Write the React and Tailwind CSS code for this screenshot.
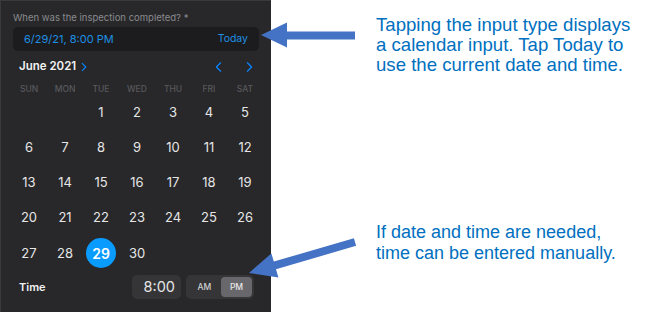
import React from 'react';

const weekdays = ['SUN', 'MON', 'TUE', 'WED', 'THU', 'FRI', 'SAT'];
const weeks = [
  [null, null, 1, 2, 3, 4, 5],
  [6, 7, 8, 9, 10, 11, 12],
  [13, 14, 15, 16, 17, 18, 19],
  [20, 21, 22, 23, 24, 25, 26],
  [27, 28, 29, 30, null, null, null],
];

const Chevron = ({ dir = 'right', className = '' }) => (
  <svg viewBox="0 0 10 16" className={className} fill="none" stroke="currentColor" strokeWidth="1.8" strokeLinecap="round" strokeLinejoin="round">
    {dir === 'right' ? <path d="M2 2l6 6-6 6" /> : <path d="M8 2L2 8l6 6" />}
  </svg>
);

const Arrows = () => (
  <svg className="absolute inset-0 pointer-events-none" width="650" height="312" viewBox="0 0 650 312">
    {/* top arrow, pointing at the input */}
    <polygon
      fill="#4472c4"
      points="261,35 287,22.5 287,31.5 355,31.5 355,39.5 287,39.5 287,47.5"
    />
    {/* bottom arrow, pointing at the time picker */}
    <polygon
      fill="#4472c4"
      points="249,273 271.4,253.4 273.8,261.6 353.9,238.2 356.1,245.8 276,269.2 278.4,277.4"
    />
  </svg>
);

const DatePicker = () => (
  <div className="w-[271px] h-[312px] bg-[#28282a] border-t border-l border-[#3a3a3c] flex flex-col" style={{ fontFamily: 'Inter, "Noto Sans", sans-serif' }}>
    <div className="px-3 mt-[10px] h-[14px] leading-[14px] text-[9.5px] text-[#8a8a8e]">
      When was the inspection completed? *
    </div>

    <div className="mx-3 mt-[2px] h-[24px] rounded-[5px] bg-[#1c1c1e] flex items-center justify-between pl-[11px] pr-[11px]">
      <span className="text-[11px] text-[#1e8fe3]">6/29/21, 8:00 PM</span>
      <span className="text-[10.5px] text-[#1e8fe3]">Today</span>
    </div>

    <div className="mt-[6px] h-[20px] flex items-center pl-[18px] pr-[18px]">
      <span className="text-[11.5px] font-semibold text-[#f2f2f2]">June 2021</span>
      <Chevron className="w-[6px] h-[10px] ml-[5px] text-[#0a84ff]" />
      <div className="ml-auto flex items-center gap-[24px]">
        <Chevron dir="left" className="w-[7px] h-[12px] text-[#0a84ff]" />
        <Chevron className="w-[7px] h-[12px] text-[#0a84ff]" />
      </div>
    </div>

    <div className="mt-[6px] ml-[10px] w-[252px] h-[12px] grid grid-cols-7">
      {weekdays.map((d) => (
        <div key={d} className="flex items-center justify-center text-[8.5px] font-medium text-[#58585c]">
          {d}
        </div>
      ))}
    </div>

    <div className="ml-[10px] w-[252px] flex flex-col">
      {weeks.map((week, i) => (
        <div key={i} className="grid grid-cols-7 h-[35.2px]">
          {week.map((day, j) => (
            <div key={j} className="flex items-center justify-center">
              {day === 29 ? (
                <div className="w-[30px] h-[30px] rounded-full bg-[#0a9bff] flex items-center justify-center text-[14px] font-semibold text-white">
                  29
                </div>
              ) : (
                <span className="text-[13px] text-[#e6e6e6]">{day}</span>
              )}
            </div>
          ))}
        </div>
      ))}
    </div>

    <div className="mt-[4px] h-[24px] flex items-center pl-[18px] pr-[17px]">
      <span className="text-[11px] font-semibold text-[#f2f2f2]">Time</span>
      <div className="ml-auto w-[49px] h-[24px] rounded-[5px] bg-[#353538] flex items-center justify-end pr-[6px] text-[14.5px] text-[#e6e6e6]">
        8:00
      </div>
      <div className="ml-[5px] w-[68px] h-[24px] rounded-[5px] bg-[#353538] flex items-center p-[2px]">
        <div className="flex-1 h-full flex items-center justify-center text-[8.5px] font-medium text-[#d0d0d0]">AM</div>
        <div className="w-[31px] h-full rounded-[4px] bg-[#68686c] flex items-center justify-center text-[8.5px] font-medium text-[#e6e6e6]">PM</div>
      </div>
    </div>
  </div>
);

export default function App() {
  return (
    <div className="relative w-[650px] h-[312px] bg-white flex overflow-hidden">
      <DatePicker />
      <div className="flex-1 flex flex-col pl-[105px] leading-[20px] text-[#0070c0]" style={{ fontFamily: '"Liberation Sans", Arial, sans-serif' }}>
        <p className="mt-[15px] text-[18.6px]">
          Tapping the input type displays<br />
          a calendar input. Tap Today to<br />
          use the current date and time.
        </p>
        <p className="mt-[147px] text-[18px] leading-[21px]">
          If date and time are needed,<br />
          time can be entered manually.
        </p>
      </div>
      <Arrows />
    </div>
  );
}
